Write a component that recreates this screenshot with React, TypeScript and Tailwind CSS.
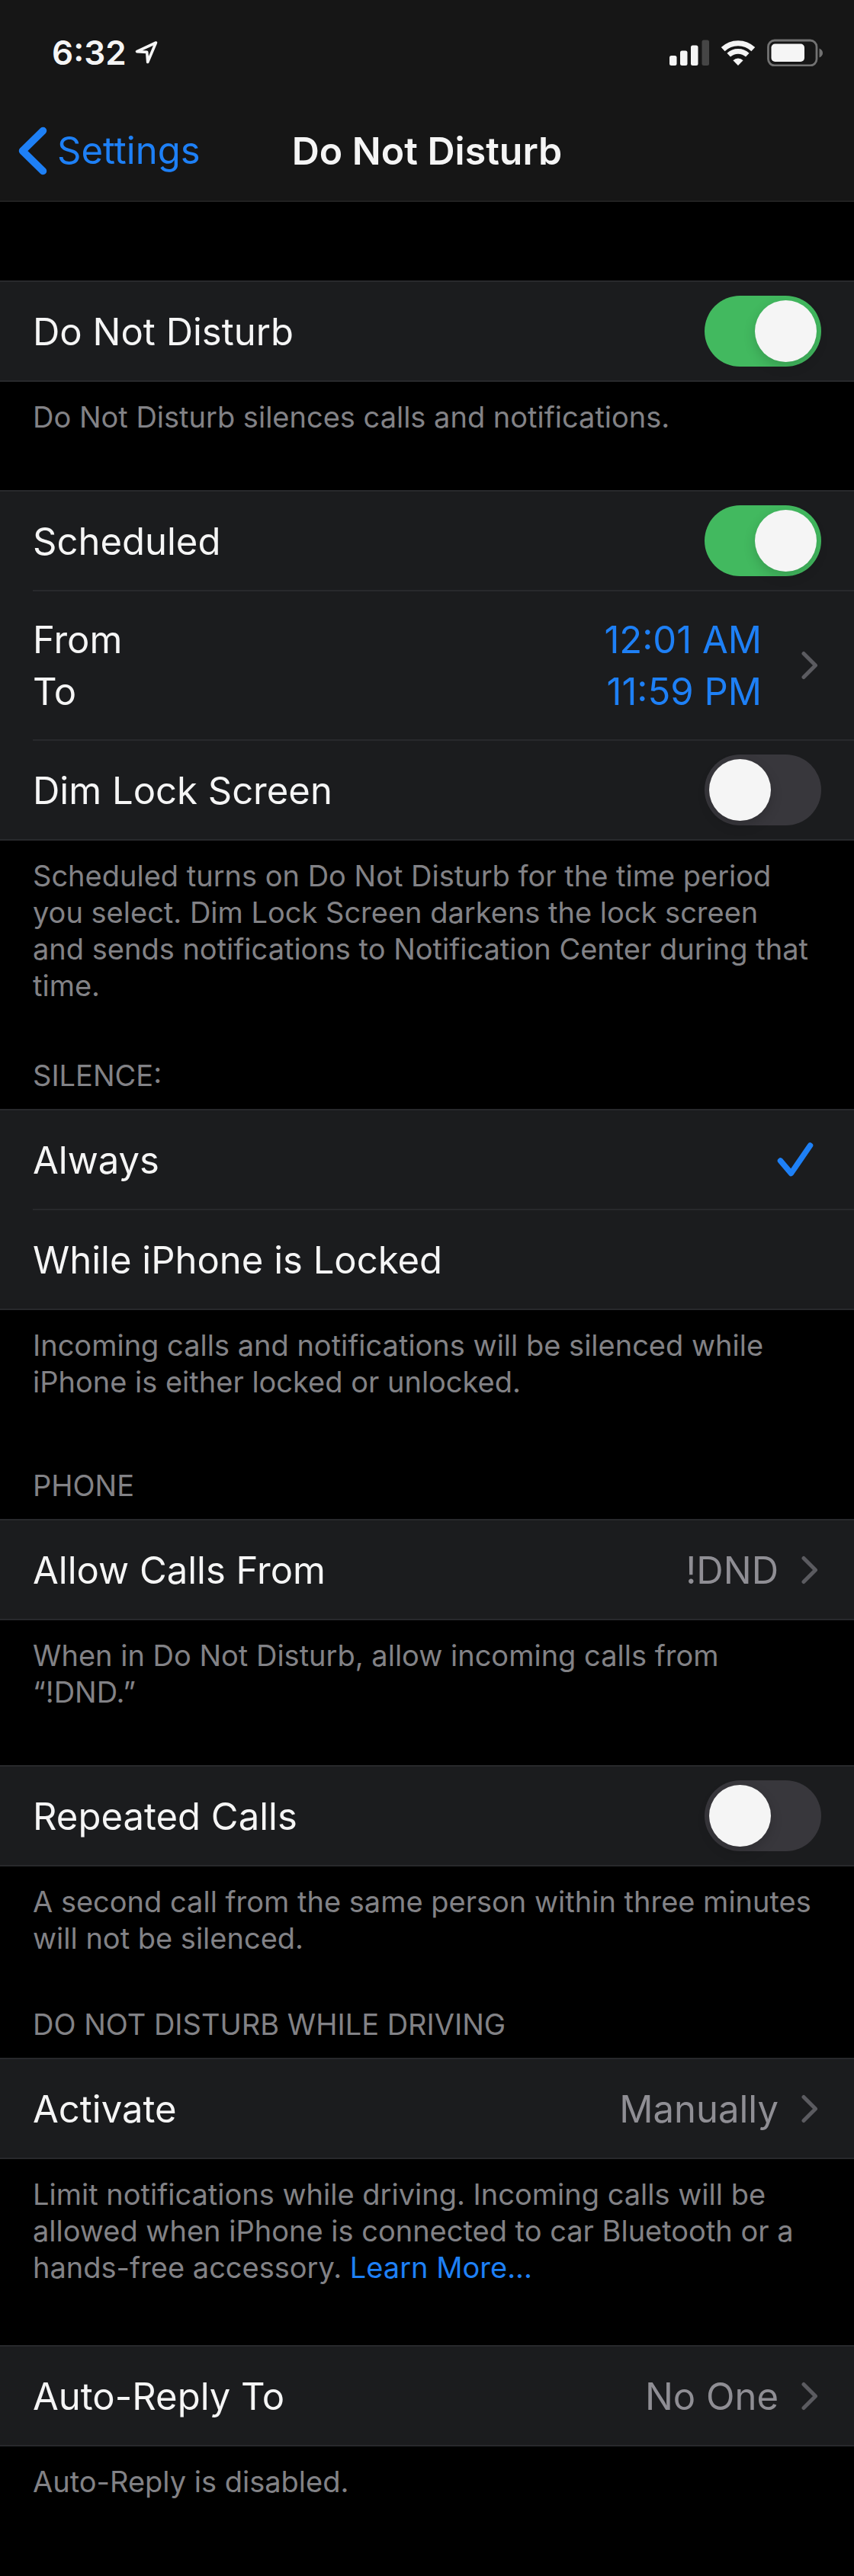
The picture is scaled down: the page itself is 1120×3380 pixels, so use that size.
import { useState, type ReactNode } from "react";

function Toggle({ id, initial }: { id: string; initial: boolean }) {
  const [on, setOn] = useState(initial);
  return (
    <input
      id={id}
      type="checkbox"
      role="switch"
      checked={on}
      onChange={(e) => setOn(e.target.checked)}
      className="h-[93px] w-[153px] shrink-0 cursor-pointer appearance-none rounded-full bg-[#38373c] p-1.5 before:block before:size-[81px] before:rounded-full before:bg-[#f5f5f5] before:shadow-[0_6px_16px_rgba(0,0,0,0.16)] before:transition-transform before:content-[''] checked:bg-[#42b95f] checked:before:translate-x-[60px]"
    />
  );
}

function ToggleRow({ id, label, initial }: { id: string; label: string; initial: boolean }) {
  return (
    <div className="flex h-[129px] items-center justify-between px-[43px]">
      <label htmlFor={id} className="pt-0.5">
        {label}
      </label>
      <Toggle id={id} initial={initial} />
    </div>
  );
}

function Chevron() {
  return (
    <svg aria-hidden="true" viewBox="0 0 22 38" className="h-[38px] w-[22px] shrink-0" fill="none">
      <path d="M3 3.5L18.5 19L3 34.5" stroke="#5b5b60" strokeWidth="5" strokeLinecap="round" strokeLinejoin="round" />
    </svg>
  );
}

function LinkRow({ label, value }: { label: string; value: string }) {
  return (
    <button type="button" className="flex h-[129px] w-full items-center pr-[47px] pl-[43px] text-left">
      <span className="flex-1 pt-0.5">{label}</span>
      <span className="pt-0.5 pr-[30px] text-[#8f8e94]">{value}</span>
      <Chevron />
    </button>
  );
}

function ChoiceRow({ label, checked, onSelect }: { label: string; checked: boolean; onSelect: () => void }) {
  return (
    <label className="relative flex h-[129px] cursor-pointer items-center justify-between pr-[53px] pl-[43px]">
      <input type="radio" name="silence" className="sr-only" checked={checked} onChange={onSelect} />
      <span className="pt-0.5">{label}</span>
      {checked && (
        <svg aria-hidden="true" viewBox="0 0 48 46" className="h-[46px] w-12" fill="none">
          <path d="M4.5 24L18.5 40.5L43.5 4" stroke="#1e80f6" strokeWidth="7.5" strokeLinecap="round" strokeLinejoin="round" />
        </svg>
      )}
    </label>
  );
}

const Group = ({ children }: { children: ReactNode }) => (
  <div className="border-y-2 border-[#28292c] bg-[#1b1c1e] text-[49px] leading-[68px] text-[#f5f5f5]">{children}</div>
);

const Divider = () => <div className="ml-[43px] h-0.5 bg-[#28292c]" />;

const Heading = ({ children }: { children: ReactNode }) => (
  <h2 className="px-[43px] pb-5 text-[38px] leading-[48px] text-[#828286]">{children}</h2>
);

const Note = ({ children }: { children: ReactNode }) => (
  <p className="pt-[22px] pr-[50px] pl-[43px] text-[38px] leading-[48px] text-[#828286]">{children}</p>
);

// The no-break space keeps "and sends" together on one line.
const scheduleNote =
  "Scheduled turns on Do Not Disturb for the time period you select. Dim Lock Screen darkens the lock screen and\u00a0sends notifications to Notification Center during that time.";

function StatusBar() {
  return (
    <div className="flex h-[137px] items-center justify-between pr-10 pl-[68px]">
      <div className="flex items-center gap-2.5">
        <span className="text-[44px] leading-[56px] font-semibold">6:32</span>
        <svg aria-hidden="true" viewBox="0 0 32 32" className="size-8" fill="none">
          <path d="M28.5 3L3.5 14.6L16.7 15.4L17.7 28.5Z" stroke="#f5f5f5" strokeWidth="3.6" strokeLinejoin="round" />
        </svg>
      </div>
      <div className="flex items-center gap-[15px]">
        <svg role="img" aria-label="Cellular signal" viewBox="0 0 52 34" className="h-[34px] w-[52px]" fill="#f5f5f5">
          <rect x="0" y="21" width="9.5" height="13" rx="2.5" />
          <rect x="14" y="14.5" width="9.5" height="19.5" rx="2.5" />
          <rect x="28" y="7.5" width="9.5" height="26.5" rx="2.5" />
          <rect x="42.5" y="0.5" width="9.5" height="33.5" rx="2.5" fill="#454545" />
        </svg>
        <svg role="img" aria-label="Wi-Fi" viewBox="0 0 46 34" className="h-[34px] w-[46px]">
          <path d="M3.2 12.6A28.6 28.6 0 0 1 42.8 12.6" fill="none" stroke="#f5f5f5" strokeWidth="7" />
          <path d="M10.7 20.2A18 18 0 0 1 35.3 20.2" fill="none" stroke="#f5f5f5" strokeWidth="6.6" />
          <path d="M23 34L16.4 27.2A9.6 9.6 0 0 1 29.6 27.2Z" fill="#f5f5f5" />
        </svg>
        <svg role="img" aria-label="Battery" viewBox="0 0 74 36" className="h-9 w-[74px]">
          <rect x="1.5" y="2" width="63.5" height="33" rx="8.5" fill="none" stroke="#727272" strokeWidth="2.8" />
          <rect x="5.5" y="6.5" width="43.5" height="23.5" rx="5" fill="#f5f5f5" />
          <path d="M68.5 12.5Q73 14.5 73 18.5T68.5 24.5Z" fill="#727272" />
        </svg>
      </div>
    </div>
  );
}

export default function App() {
  const [silence, setSilence] = useState("always");
  return (
    <div className="min-h-screen bg-black font-['Inter',sans-serif]">
      <header className="border-b-2 border-[#212121] bg-[#161616] pb-1 text-[#f5f5f5]">
        <StatusBar />
        <nav className="grid h-[122px] grid-cols-[1fr_auto_1fr] items-center">
          <a href="#settings" className="flex items-center gap-3 pl-[23px] text-[49px] leading-[68px] text-[#1e80f6]">
            <svg aria-hidden="true" viewBox="0 0 40 64" className="h-16 w-10" fill="none">
              <path d="M33.5 5.5L6.5 32L33.5 58.5" stroke="#1e80f6" strokeWidth="9.5" strokeLinecap="round" strokeLinejoin="round" />
            </svg>
            Settings
          </a>
          <h1 className="text-[50px] leading-[68px] font-semibold">Do Not Disturb</h1>
        </nav>
      </header>

      <main>
        <section className="mt-[103px]">
          <Group>
            <ToggleRow id="dnd" label="Do Not Disturb" initial />
          </Group>
          <Note>Do Not Disturb silences calls and notifications.</Note>
        </section>

        <section className="mt-[72px]">
          <Group>
            <ToggleRow id="scheduled" label="Scheduled" initial />
            <Divider />
            <button type="button" className="flex h-[194px] w-full items-center pr-[47px] pl-[43px] text-left">
              <span className="flex-1 pt-0.5">
                <span className="block">From</span>
                <span className="block">To</span>
              </span>
              <span className="pt-0.5 pr-[52px] text-right text-[#1e80f6]">
                <span className="block">12:01 AM</span>
                <span className="block">11:59 PM</span>
              </span>
              <Chevron />
            </button>
            <Divider />
            <ToggleRow id="dim" label="Dim Lock Screen" initial={false} />
          </Group>
          <Note>{scheduleNote}</Note>
        </section>

        <section className="mt-[70px]">
          <Heading>SILENCE:</Heading>
          <Group>
            <ChoiceRow label="Always" checked={silence === "always"} onSelect={() => setSilence("always")} />
            <Divider />
            <ChoiceRow label="While iPhone is Locked" checked={silence === "locked"} onSelect={() => setSilence("locked")} />
          </Group>
          <Note>Incoming calls and notifications will be silenced while iPhone is either locked or unlocked.</Note>
        </section>

        <section className="mt-[88px]">
          <Heading>PHONE</Heading>
          <Group>
            <LinkRow label="Allow Calls From" value="!DND" />
          </Group>
          <Note>When in Do Not Disturb, allow incoming calls from “!DND.”</Note>
        </section>

        <section className="mt-[72px]">
          <Group>
            <ToggleRow id="repeated" label="Repeated Calls" initial={false} />
          </Group>
          <Note>A second call from the same person within three minutes will not be silenced.</Note>
        </section>

        <section className="mt-[65px]">
          <Heading>DO NOT DISTURB WHILE DRIVING</Heading>
          <Group>
            <LinkRow label="Activate" value="Manually" />
          </Group>
          <Note>
            Limit notifications while driving. Incoming calls will be allowed when iPhone is connected to car Bluetooth
            or a hands-free accessory.{" "}
            <a href="#learn-more" className="text-[#1e80f6]">
              Learn More...
            </a>
          </Note>
        </section>

        <section className="mt-[78px]">
          <Group>
            <LinkRow label="Auto-Reply To" value="No One" />
          </Group>
          <Note>Auto-Reply is disabled.</Note>
        </section>
      </main>
    </div>
  );
}
